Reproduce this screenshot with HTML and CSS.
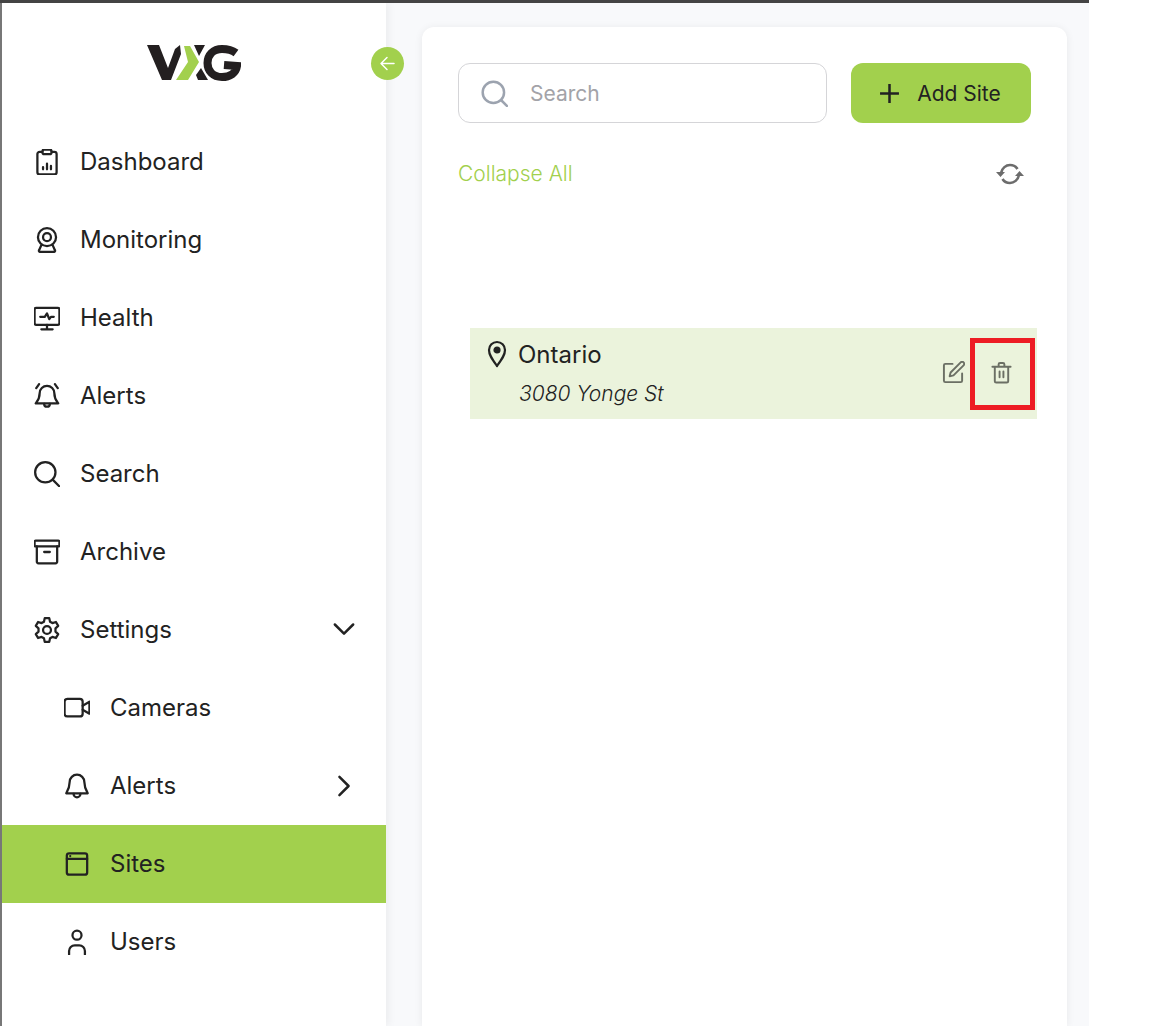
FILE: index.html
```html
<!DOCTYPE html>
<html lang="en">
  <head>
    <meta charset="UTF-8" />
    <title>Sites</title>
    <link rel="stylesheet" href="styles.css">
  </head>
  <body>
    <div class="app">
      <aside class="sidebar">
        <div class="logo">
          <svg width="94" height="36" viewBox="0 0 94 36">
            <polygon fill="#231f20" points="0,0 12,0 21,23 28,4 33,0 34,9 24,35 15,35" />
            <polygon fill="#a2d04d" points="37,1 43,1 52,17 41,35 29,35 41,17" />
            <polygon fill="#231f20" points="47,0 58,0 52,11" />
            <polygon fill="#231f20" points="54,23 61,35 51,35 49,30" />
            <path fill="none" stroke="#231f20" stroke-width="8" d="M89 8C85 5 80 4 75 4C66 4 60.500 10 60.500 18C60.500 26 66 32 75 32C83 32 89 28 90 21L77 20" />
          </svg>
        </div>
        <button class="collapse-btn">
          <svg width="17" height="17" viewBox="0 0 17 17" fill="none" stroke="#fff" stroke-width="1.500" stroke-linecap="round" stroke-linejoin="round"><path d="M15 8.500H2M8 2.500l-6 6 6 6" /></svg>
        </button>
        <nav class="menu">
          <a class="menu-item">
            <svg class="icon" viewBox="0.500 0.500 23 23"><path d="M8 3H5.500a2 2 0 0 0-2 2V21a2 2 0 0 0 2 2h13a2 2 0 0 0 2-2V5a2 2 0 0 0-2-2H16" /><rect x="8" y="1" width="8" height="4" rx="1.500" /><path d="M8.500 18.500v-2M12 18.500v-5M15.500 18.500v-3" /></svg>
            <span>Dashboard</span>
          </a>
          <a class="menu-item">
            <svg class="icon" viewBox="0.500 0.500 23 23"><circle cx="12" cy="9.500" r="8" /><circle cx="12" cy="9.500" r="3.500" /><path d="M7 16.500l-2 4.500a1 1 0 0 0 1 1.500h12a1 1 0 0 0 1-1.500L17 16.500" /></svg>
            <span>Monitoring</span>
          </a>
          <a class="menu-item">
            <svg class="icon" viewBox="0.500 0.500 23 23"><rect x="1" y="3" width="22" height="15" rx="1.500" /><path d="M6 11h4l2-3 2 5 1.500-2H18M12 18v4M7 22h10" /></svg>
            <span>Health</span>
          </a>
          <a class="menu-item">
            <svg class="icon" viewBox="0.500 0.500 23 23"><path d="M12 3a6.500 6.500 0 0 0-6.500 6.500c0 5-2 7-3.500 9h20c-1.500-2-3.500-4-3.500-9A6.500 6.500 0 0 0 12 3z" /><path d="M9.500 19a2.500 2.500 0 0 0 5 0M5 1.500 2.500 5M19 1.500 21.500 5" /></svg>
            <span>Alerts</span>
          </a>
          <a class="menu-item">
            <svg class="icon" viewBox="0.500 0.500 23 23"><circle cx="10.500" cy="10.500" r="9" /><path d="M17 17l6 6" /></svg>
            <span>Search</span>
          </a>
          <a class="menu-item">
            <svg class="icon" viewBox="0.500 0.500 23 23"><rect x="1" y="2" width="22" height="5" rx="1" /><path d="M3 7v13.500A1.500 1.500 0 0 0 4.500 22h15a1.500 1.500 0 0 0 1.500-1.500V7M9.500 12h5" /></svg>
            <span>Archive</span>
          </a>
          <a class="menu-item">
            <svg class="icon" viewBox="0.500 0.500 23 23"><circle cx="12" cy="12" r="3.500" /><path d="M10 1.500h4l.7 3.200 2.100 1.200 3.100-1 2 3.500-2.400 2.200v2.800l2.400 2.200-2 3.500-3.100-1-2.100 1.200-.7 3.200h-4l-.7-3.200-2.100-1.200-3.100 1-2-3.500 2.400-2.200V10.600L2.100 8.400l2-3.500 3.100 1 2.100-1.200z" /></svg>
            <span>Settings</span>
            <svg class="chevron" viewBox="0 0 24 24"><path d="M2 6l10 10L22 6" /></svg>
          </a>
          <a class="menu-item sub">
            <svg class="icon" viewBox="0.500 0.500 23 23"><rect x="1" y="4" width="16" height="15.500" rx="2.500" /><path d="M17 10l6-3.500v10.500L17 13.500" /></svg>
            <span>Cameras</span>
          </a>
          <a class="menu-item sub">
            <svg class="icon" viewBox="0.500 0.500 23 23"><path d="M12 2a6.500 6.500 0 0 0-6.500 6.500c0 5-1.500 7.500-3 10h19c-1.500-2.500-3-5-3-10A6.500 6.500 0 0 0 12 2z" /><path d="M9 19a3 3 0 0 0 6 0" /></svg>
            <span>Alerts</span>
            <svg class="chevron" viewBox="0 0 24 24"><path d="M7 2l10 10L7 22" /></svg>
          </a>
          <a class="menu-item sub active">
            <svg class="icon" viewBox="0.500 0.500 23 23"><rect x="3" y="2.500" width="18" height="19" rx="2" /><path d="M3 7.500h18M6 5h.01" /></svg>
            <span>Sites</span>
          </a>
          <a class="menu-item sub">
            <svg class="icon" viewBox="0.500 0.500 23 23"><circle cx="12" cy="6" r="4" /><path d="M5 23v-3a5 5 0 0 1 5-5h4a5 5 0 0 1 5 5v3" /></svg>
            <span>Users</span>
          </a>
        </nav>
      </aside>
      <main class="content">
        <section class="card">
          <div class="toolbar">
            <div class="search-box">
              <svg class="search-icon" viewBox="0 0 24 24"><circle cx="11" cy="11" r="9.500" /><path d="M18 18l5 5" /></svg>
              <span>Search</span>
            </div>
            <button class="add-btn">
              <svg class="plus" viewBox="0 0 20 20"><path d="M10 1v18M1 10h18" /></svg>
              Add Site
            </button>
          </div>
          <div class="list-head">
            <a class="collapse-all">Collapse All</a>
            <svg class="refresh" viewBox="0 0 28 24" fill="none" stroke="#6c6c6c" stroke-width="2.600"><path d="M5 11C6 6 10 3 14 3c3 0 6 1.500 7.500 4" /><path d="M23 13c-1 5-5 8-9 8-3 0-6-1.500-7.500-4" /><path fill="#6c6c6c" stroke="none" d="M0 10h9l-4.500 5zM19 14h9l-4.500-5z" /></svg>
          </div>
          <div class="site-row">
            <svg class="pin" viewBox="0 0 20 28"><path d="M10 26C5 19 2 15 2 10a8 8 0 0 1 16 0c0 5-3 9-8 16z" /><circle cx="10" cy="10" r="2.500" fill="#222" /></svg>
            <div class="site-info">
              <div class="site-name">Ontario</div>
              <div class="site-address">3080 Yonge St</div>
            </div>
            <div class="site-actions">
              <svg class="action" viewBox="0 0 24 24"><path d="M11 3H3.500A1.500 1.500 0 0 0 2 4.500v16A1.500 1.500 0 0 0 3.500 22h16a1.500 1.500 0 0 0 1.500-1.500V13" /><path d="M9 12 19.500 1.500a2 2 0 0 1 3 3L12 15l-4 1z" /></svg>
              <svg class="action" viewBox="0 0 24 24"><path d="M2.500 6h19M9 6V3.500A1.500 1.500 0 0 1 10.500 2h3A1.500 1.500 0 0 1 15 3.500V6M5 6v15a1.500 1.500 0 0 0 1.500 1.500h11A1.500 1.500 0 0 0 19 21V6M10 11v6M14 11v6" /></svg>
            </div>
            <div class="highlight"></div>
          </div>
        </section>
      </main>
    </div>
  </body>
</html>
```

FILE: styles.css
```css
html,
body {
  margin: 0;
  padding: 0;
  height: 100%;
  background: #fff;
}

body {
  font-family: "Inter", "Liberation Sans", sans-serif;
  color: #222;
  overflow: hidden;
}

.app {
  display: flex;
  width: 1089px;
  height: 1026px;
  box-sizing: border-box;
  border-top: 3px solid #444;
  background: #f8f9fb;
  overflow: hidden;
}

.sidebar {
  position: relative;
  z-index: 1;
  width: 386px;
  flex: none;
  box-sizing: border-box;
  border-left: 2px solid #777;
  background: #fff;
  box-shadow: 3px 0 8px rgba(0, 0, 0, 0.05);
}

.logo {
  display: flex;
  justify-content: center;
  padding: 42px 0 0 0;
  height: 78px;
}

.collapse-btn {
  position: absolute;
  top: 44px;
  left: 369px;
  width: 33px;
  height: 33px;
  padding: 0;
  border: 0;
  border-radius: 50%;
  background: #a2d04d;
  display: flex;
  align-items: center;
  justify-content: center;
}

.menu {
  display: flex;
  flex-direction: column;
}

.menu-item {
  display: flex;
  align-items: center;
  height: 78px;
  padding-left: 32px;
  font-size: 24px;
  color: #222;
}

.menu-item span {
  margin-top: -2px;
}

.menu-item.sub {
  padding-left: 62px;
}

.menu-item.active {
  background: #a2d04d;
}

.icon {
  width: 26px;
  height: 26px;
  margin-right: 20px;
  flex: none;
  fill: none;
  stroke: #222;
  stroke-width: 2;
  stroke-linecap: round;
  stroke-linejoin: round;
}

.chevron {
  width: 22px;
  height: 22px;
  margin-left: auto;
  margin-right: 31px;
  fill: none;
  stroke: #222;
  stroke-width: 2.700;
  stroke-linecap: round;
  stroke-linejoin: round;
}

.content {
  flex: 1;
  padding: 24px 22px 0 36px;
  min-width: 0;
}

.card {
  height: 100%;
  box-sizing: border-box;
  padding: 36px 36px 0;
  border-radius: 12px 12px 0 0;
  background: #fff;
  box-shadow: 0 1px 8px rgba(0, 0, 0, 0.07);
}

.toolbar {
  display: flex;
  gap: 24px;
}

.search-box {
  flex: 1;
  height: 60px;
  box-sizing: border-box;
  display: flex;
  align-items: center;
  padding-left: 22px;
  border: 1px solid #d5d5d8;
  border-radius: 12px;
  font-size: 21px;
  color: #a3a3a8;
}

.search-icon {
  width: 27px;
  height: 27px;
  margin-right: 22px;
  fill: none;
  stroke: #9ca3af;
  stroke-width: 2.200;
  stroke-linecap: round;
}

.add-btn {
  width: 180px;
  height: 60px;
  padding: 0 2px 0 0;
  border: 0;
  border-radius: 12px;
  background: #a2d04d;
  display: flex;
  align-items: center;
  justify-content: center;
  gap: 17px;
  font-family: inherit;
  font-size: 21px;
  color: #222;
}

.plus {
  width: 21px;
  height: 21px;
  fill: none;
  stroke: #222;
  stroke-width: 2.400;
}

.list-head {
  display: flex;
  align-items: center;
  justify-content: space-between;
  height: 32px;
  margin-top: 35px;
  padding-right: 7px;
}

.collapse-all {
  margin-top: -2px;
  font-size: 21px;
  font-weight: 300;
  color: #a2d04d;
}

.refresh {
  width: 28px;
  height: 24px;
}

.site-row {
  position: relative;
  display: flex;
  margin: 138px -6px 0 12px;
  height: 91px;
  box-sizing: border-box;
  padding: 12px 0 0 17px;
  background: #ebf3dc;
}

.pin {
  width: 20px;
  height: 28px;
  flex: none;
  margin-right: 11px;
  fill: none;
  stroke: #222;
  stroke-width: 2.200;
  stroke-linejoin: round;
}

.site-info {
  flex: 1;
}

.site-name {
  font-size: 24px;
  line-height: 30px;
}

.site-address {
  margin: 11px 0 0 1px;
  font-size: 21px;
  font-style: italic;
  font-weight: 300;
  line-height: 26px;
}

.site-actions {
  display: flex;
  gap: 25px;
  align-items: flex-start;
  padding: 21px 24px 0 0;
}

.action {
  width: 23px;
  height: 23px;
  fill: none;
  stroke: #6b6f64;
  stroke-width: 2;
  stroke-linecap: round;
  stroke-linejoin: round;
}

.highlight {
  position: absolute;
  top: 10px;
  right: 2px;
  width: 65px;
  height: 72px;
  box-sizing: border-box;
  border: 5px solid #ed1c24;
}
```
